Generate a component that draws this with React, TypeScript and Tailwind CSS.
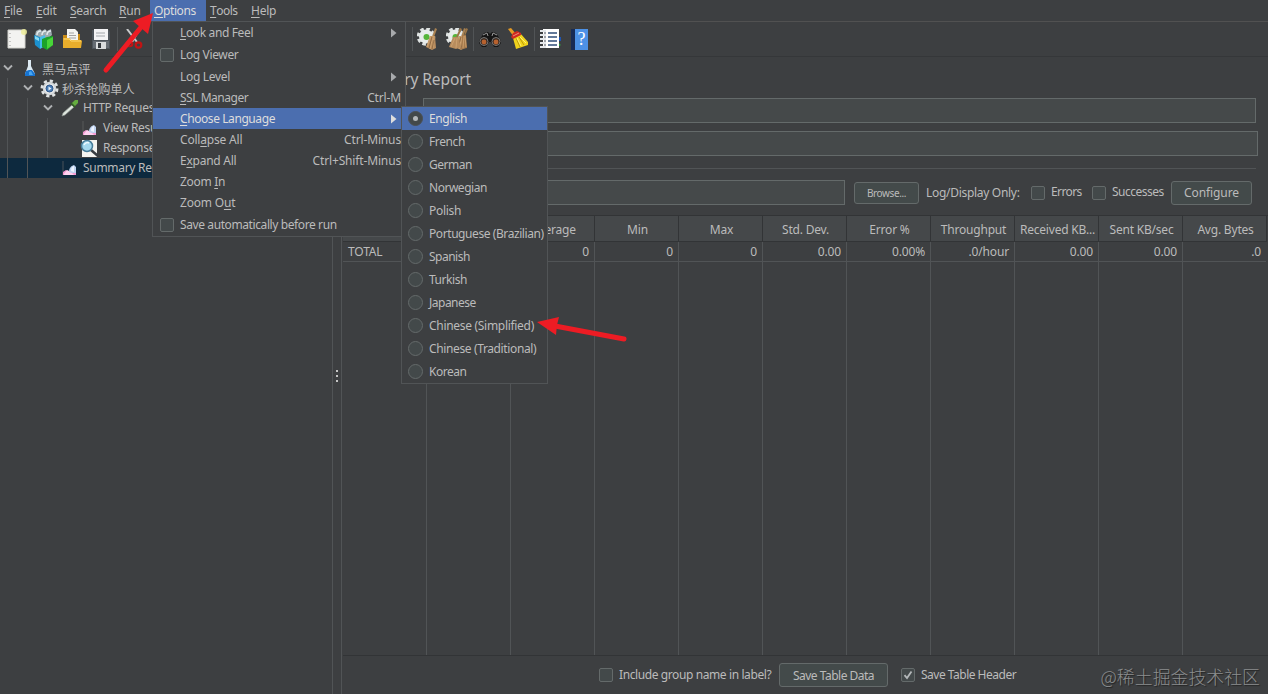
import type { ReactNode } from "react";
import clsx from "clsx";

interface MenuEntry {
  readonly label: string;
  readonly mnemonic?: number;
  readonly shortcut?: string;
  readonly submenu?: boolean;
  readonly checkbox?: boolean;
  readonly active?: boolean;
  readonly row: string;
  readonly tracking?: string;
}

const menuEntries: MenuEntry[] = [
  { label: "Look and Feel", mnemonic: 0, submenu: true, row: "h-[22px]", tracking: "tracking-[-0.36px]" },
  { label: "Log Viewer", checkbox: true, row: "h-[22px]", tracking: "tracking-[-0.36px]" },
  { label: "Log Level", submenu: true, row: "h-[22px]", tracking: "tracking-[-0.3px]" },
  { label: "SSL Manager", mnemonic: 0, shortcut: "Ctrl-M", row: "h-5", tracking: "tracking-[-0.48px]" },
  { label: "Choose Language", mnemonic: 0, submenu: true, active: true, row: "h-[21px]", tracking: "tracking-[-0.42px]" },
  { label: "Collapse All", mnemonic: 4, shortcut: "Ctrl-Minus", row: "h-[21px]", tracking: "tracking-[-0.2px]" },
  { label: "Expand All", mnemonic: 1, shortcut: "Ctrl+Shift-Minus", row: "h-[21px]", tracking: "tracking-[-0.25px]" },
  { label: "Zoom In", mnemonic: 5, row: "h-[21px]", tracking: "tracking-[-0.3px]" },
  { label: "Zoom Out", mnemonic: 6, row: "h-[21px]", tracking: "tracking-[-0.2px]" },
  { label: "Save automatically before run", checkbox: true, row: "h-[23px]", tracking: "tracking-[-0.4px]" },
];

const languages = [
  { name: "English", tracking: "tracking-[-0.4px]" },
  { name: "French", tracking: "tracking-[-0.4px]" },
  { name: "German", tracking: "tracking-[-0.5px]" },
  { name: "Norwegian", tracking: "tracking-[-0.48px]" },
  { name: "Polish", tracking: "tracking-[-0.3px]" },
  { name: "Portuguese (Brazilian)", tracking: "tracking-[-0.42px]" },
  { name: "Spanish", tracking: "tracking-[-0.5px]" },
  { name: "Turkish", tracking: "tracking-[-0.45px]" },
  { name: "Japanese", tracking: "tracking-[-0.5px]" },
  { name: "Chinese (Simplified)", tracking: "tracking-[-0.3px]" },
  { name: "Chinese (Traditional)", tracking: "tracking-[-0.37px]" },
  { name: "Korean", tracking: "tracking-[-0.5px]" },
];

// the first two columns sit behind the open menus
const columns = [
  { title: "", value: "TOTAL" },
  { title: "", value: "" },
  { title: "Average", value: "0" },
  { title: "Min", value: "0" },
  { title: "Max", value: "0" },
  { title: "Std. Dev.", value: "0.00" },
  { title: "Error %", value: "0.00%" },
  { title: "Throughput", value: ".0/hour" },
  { title: "Received KB...", value: "0.00" },
  { title: "Sent KB/sec", value: "0.00" },
  { title: "Avg. Bytes", value: ".0" },
];

function Mnemonic({ text, index }: { text: string; index?: number }) {
  if (index === undefined) return <>{text}</>;
  return (
    <>
      {text.slice(0, index)}
      <span className="underline decoration-1 underline-offset-2">{text[index]}</span>
      {text.slice(index + 1)}
    </>
  );
}

function CheckBox({ checked }: { checked?: boolean }) {
  return (
    <span className="block h-[14px] w-[14px] shrink-0 rounded-[2px] border border-[#646a6a] bg-[#43494a]">
      {checked && (
        <svg viewBox="0 0 12 12" className="h-3 w-3">
          <path d="M2.5 6.2 5 9 9.5 2.5" fill="none" stroke="#b4b8ba" strokeWidth="1.8" />
        </svg>
      )}
    </span>
  );
}

function Radio({ checked }: { checked?: boolean }) {
  return (
    <span
      className={clsx(
        "flex h-[15px] w-[15px] shrink-0 items-center justify-center rounded-full border bg-[#43494a]",
        checked ? "border-[#4b4f52]" : "border-[#646a6a]",
      )}
    >
      {checked && <span className="h-[5px] w-[5px] rounded-full bg-[#b4b8ba]" />}
    </span>
  );
}

/* ---------- toolbar icons ---------- */

function NewIcon() {
  return (
    <svg width="20" height="20" viewBox="0 0 20 20">
      <path d="M1 1h17v18H1z" fill="#f3f3f1" stroke="#d2d2cd" />
      <path d="M3 4v1M3 8v1M3 12v1M3 16v1" stroke="#999" />
      <circle cx="17" cy="3" r="3" fill="#ecec9a" opacity=".85" />
    </svg>
  );
}

function TemplatesIcon() {
  return (
    <svg width="21" height="21" viewBox="0 0 21 21">
      <path d="M2 6 3 2l4-2 2 2 3-2 2 2 4-2 1 6-5 4H5z" fill="#9dabb0" />
      <path d="M4 6c0-3 1-4 4-4M9 6c0-3 1-4 4-4M14 6c0-3 1-4 4-4" fill="none" stroke="#e4eaec" strokeWidth="1.5" />
      <path d="m1 6 6 2v12l-5-4z" fill="#1c91cf" />
      <path d="m7 8 5-2v11l-5 3z" fill="#47bde9" />
      <path d="m2 7 4 2v3L2 10z" fill="#8bdcf4" />
      <path d="m9 10 5-2 6-1v9l-6 5-5-3z" fill="#1ba32a" />
      <path d="m14 11 6-3v8l-6 4z" fill="#48d538" />
    </svg>
  );
}

function OpenIcon() {
  return (
    <svg width="21" height="20" viewBox="0 0 21 20">
      <path d="M1 6h4l1-1h12v12H1z" fill="#c98a15" />
      <path d="M5 0h8l3 3v9H5z" fill="#f4f4f2" />
      <path d="M7 4h5M7 6.500h7M7 9h7" stroke="#a2a2a2" />
      <path d="M1 9h6l2 2h10l1 1-1 7H1z" fill="#e9ae2c" />
      <path d="M2 10h5l2 2h10" fill="none" stroke="#ffda70" />
    </svg>
  );
}

function SaveIcon() {
  return (
    <svg width="19" height="20" viewBox="0 0 19 20">
      <path d="M0 1h17l1 2v17H0z" fill="#4d535a" />
      <path d="M2 0h14v11H2z" fill="#f3f3f5" />
      <path d="M4 4h9M4 7h9" stroke="#a2a6ab" />
      <path d="M1 12h16v7H1z" fill="#666c73" />
      <path d="M4 13h10v7H4z" fill="#dadcde" />
      <path d="M6 14h3v5H6z" fill="#34383d" />
    </svg>
  );
}

function CutIcon() {
  return (
    <svg width="19" height="20" viewBox="0 0 19 20">
      <path d="M2 0 12 13M14 1 7 13" stroke="#c8cacc" strokeWidth="2" />
      <ellipse cx="4.500" cy="15" rx="2.800" ry="2.300" fill="none" stroke="#c11313" strokeWidth="2" />
      <ellipse cx="13.500" cy="16" rx="2.800" ry="2.600" fill="none" stroke="#c11313" strokeWidth="2.200" />
    </svg>
  );
}

function GearBroomIcon({ double }: { double?: boolean }) {
  return (
    <svg width="22" height="22" viewBox="0 0 22 22">
      <circle cx="9" cy="8.500" r="7.800" fill="none" stroke="#dfe3e2" strokeWidth="3" strokeDasharray="3.600 2.526" />
      <circle cx="9" cy="8.500" r="7" fill="#e8eceb" />
      <circle cx="9.500" cy="9" r="3" fill="#55b53a" />
      <path d="m18 0 2 1-3 8h-2z" fill="#a88253" />
      <path d="M13 8h5l1 12-4 2-6-3z" fill="#b98d5e" />
      <path d="m14 8-4 11M16 8l-3 13M17 8l-1 12" stroke="#d0a674" strokeWidth=".8" />
      <path d="m15 9-3 11M17 12l-2 9" stroke="#765232" strokeWidth=".6" />
      {double && (
        <>
          <path d="m14 0 2 1-4 8h-2zM20 0l2 1-3 7h-1z" fill="#9a7547" />
          <path d="M7 9h5l3 10-5 2-7-2z" fill="#b88c5d" />
          <path d="M16 7h4l1 13-5 1z" fill="#a77a4b" />
          <path d="m9 10-4 9M11 10l-1 10M18 8l-1 12M19 8l1 11" stroke="#d0a674" strokeWidth=".8" />
        </>
      )}
    </svg>
  );
}

function BinocularsIcon() {
  return (
    <svg width="22" height="16" viewBox="0 0 22 16">
      <path d="M5 2 9 1l2 2 2-2 4 1 4 6 1 4-3 4h-4l-3-5h-2l-3 5H3l-3-4 1-4z" fill="#151515" />
      <path d="m4 4 4-2 1 3M18 4l-4-2-1 3" fill="none" stroke="#999" />
      <circle cx="5" cy="10.500" r="4" fill="#3b2b22" stroke="#777" />
      <circle cx="17" cy="10.500" r="4" fill="#3b2b22" stroke="#777" />
      <circle cx="5" cy="11" r="2.400" fill="#b8622f" />
      <circle cx="17" cy="11" r="2.400" fill="#b8622f" />
    </svg>
  );
}

function BroomIcon() {
  return (
    <svg width="22" height="22" viewBox="0 0 22 22">
      <path d="m1 1 3-1 6 7-3 2z" fill="#e49a25" />
      <path d="m6 10 7-5 8 9v3L9 21z" fill="#f0d31c" />
      <path d="m9 10 4 9M12 9l5 8" stroke="#a98a08" strokeWidth=".8" />
      <path d="m10 10 4 8M13 9l6 6" stroke="#fff173" />
      <path d="m4 9 2-4 4-2 4 2v2l-8 4z" fill="#cf2920" />
      <path d="m6 8 6-3" stroke="#ef8f76" />
    </svg>
  );
}

function ListIcon() {
  return (
    <svg width="22" height="22" viewBox="0 0 22 22">
      <path d="m16 13 5 4-5 3z" fill="#2f9f44" />
      <path d="M17 9h4v4h-4z" fill="#1f55b0" />
      <path d="M3 1h16v19H3z" fill="#fff" />
      <path d="M8 5h9M8 9h9M8 13h9M8 17h9" stroke="#304d78" strokeWidth="1.300" />
      <path d="M0 3h6M0 7h6M0 11h6M0 15h6M0 19h6" stroke="#e5e8eb" strokeWidth="2" />
      <path d="M4 5h2M4 9h2M4 13h2M4 17h2" stroke="#303743" strokeWidth=".9" />
    </svg>
  );
}

function HelpIcon() {
  return (
    <span className="flex h-[21px] w-[17px] items-center justify-center border-l-4 border-[#182b55] bg-[#4d91e5] font-['Liberation_Serif',serif] text-[18px] tracking-normal text-white">
      ?
    </span>
  );
}

/* ---------- tree icons ---------- */

function FlaskIcon() {
  return (
    <svg width="14" height="18" viewBox="0 0 14 18">
      <path d="M5 1h3v6l4 8v2H2v-2l3-8z" fill="#dce9f2" />
      <path d="m3 12 3-1h3l3 4v2H2v-2z" fill="#1673d1" />
      <path d="m6 13 2-1 2 4H6z" fill="#49a6f1" />
    </svg>
  );
}

function GearIcon() {
  return (
    <svg width="19" height="19" viewBox="0 0 19 19">
      <circle cx="9.500" cy="9.500" r="7.500" fill="none" stroke="#dfe2e3" strokeWidth="3" strokeDasharray="3.100 2.790" />
      <circle cx="9.500" cy="9.500" r="6" fill="#e9eaeb" stroke="#cfd3d5" strokeWidth="1.500" />
      <circle cx="9.500" cy="9.500" r="3.500" fill="#4b7eb8" stroke="#2e5687" />
      <path d="m8.500 7.500 3 2-3 2z" fill="#eaf3fa" />
    </svg>
  );
}

function DropperIcon() {
  return (
    <svg width="18" height="18" viewBox="0 0 18 18">
      <path d="m1 17 1-3 9-8 2 2-9 8z" fill="#dfe6df" stroke="#8b938e" strokeWidth=".7" />
      <path d="m10 4 4 4" stroke="#315f24" strokeWidth="2" />
      <path d="m11 4 3-3 3 0v3l-3 3z" fill="#65ad3f" />
    </svg>
  );
}

function ChartIcon() {
  return (
    <svg width="15" height="15" viewBox="0 0 15 15">
      <path d="M1 0v14" fill="none" stroke="#666" strokeWidth=".7" />
      <path d="M1 14v-3l3-2 3 2 4-1 3 1v3z" fill="#f39ad3" />
      <path d="m2 13 3-4 4 2 3 3H2z" fill="#ffd2f0" />
      <path d="M7 11c0-4 2-6 5-7l2 2v6h-4z" fill="#bfd3f0" />
      <path d="M9 10c0-3 1-4 3-5v6z" fill="#edf4ff" />
    </svg>
  );
}

function MagnifierIcon() {
  return (
    <svg width="19" height="19" viewBox="0 0 19 19">
      <path d="M2 1h15v17H2z" fill="#f4f4f1" />
      <path d="m11 11 7 6" stroke="#383d42" strokeWidth="2.500" />
      <circle cx="7" cy="7" r="5.500" fill="#a4d8ee" stroke="#477c99" strokeWidth="1.500" />
      <path d="M4 6c1-2 3-3 5-2" fill="none" stroke="#eefaff" strokeWidth="1.500" />
    </svg>
  );
}

function Chevron() {
  return (
    <svg width="10" height="8" viewBox="0 0 10 8" className="shrink-0">
      <path d="m1 1.500 4 4 4-4" fill="none" stroke="#aeb0b2" strokeWidth="1.900" />
    </svg>
  );
}

interface TreeRowProps {
  readonly icon: ReactNode;
  readonly label: string;
  readonly indent: string;
  readonly open?: boolean;
  readonly selected?: boolean;
  readonly guides?: number;
  readonly cjk?: boolean;
}

function TreeRow({ icon, label, indent, open, selected, guides = 0, cjk }: TreeRowProps) {
  return (
    <div className={clsx("relative flex h-5 items-center whitespace-nowrap", indent, selected && "bg-[#0d293e]")}>
      {guides > 0 && <span className="absolute left-[7px] h-5 w-px bg-[#515456]" />}
      {guides > 1 && <span className="absolute left-[27px] h-5 w-px bg-[#515456]" />}
      {guides > 2 && <span className="absolute left-[47px] h-5 w-px bg-[#515456]" />}
      {open && <Chevron />}
      <span className={clsx("flex w-[25px] shrink-0 justify-center", open && "ml-1")}>{icon}</span>
      <span
        className={clsx(
          cjk
            ? "pt-px font-['Noto_Sans_CJK_SC',sans-serif] text-[12.200px] tracking-[-0.1px]"
            : "ml-px tracking-[-0.3px]",
        )}
      >
        {label}
      </span>
    </div>
  );
}

function MenuBar() {
  const item = "flex h-[21px] items-center";
  return (
    <nav className="flex h-[22px] border-b border-[#515151] tracking-[-0.25px]">
      <span className={`${item} w-8 pl-1`}><Mnemonic text="File" index={0} /></span>
      <span className={`${item} w-[34px] pl-1`}><Mnemonic text="Edit" index={0} /></span>
      <span className={`${item} w-[49px] pl-1`}><Mnemonic text="Search" index={0} /></span>
      <span className={`${item} w-[35px] pl-1`}><Mnemonic text="Run" index={0} /></span>
      <span className={`${item} w-14 bg-[#4b6eaf] pl-1 tracking-[-0.4px] text-[#dddddd]`}><Mnemonic text="Options" index={0} /></span>
      <span className={`${item} w-[41px] pl-1 tracking-[-0.5px]`}><Mnemonic text="Tools" index={0} /></span>
      <span className={`${item} pl-1`}><Mnemonic text="Help" index={0} /></span>
    </nav>
  );
}

function ToolBar() {
  const divider = "h-6 w-px bg-[#515456]";
  return (
    <div className="flex h-[35px] items-center border-b border-[#353739] pl-[7px]">
      <div className="flex w-[405px] items-center">
        <span className="w-[26px]"><NewIcon /></span>
        <span className="w-[29px]"><TemplatesIcon /></span>
        <span className="w-[30px]"><OpenIcon /></span>
        <span className="w-[25px]"><SaveIcon /></span>
        <span className={divider} />
        <span className="ml-[7px]"><CutIcon /></span>
        <span className="ml-2 h-6 w-px bg-[#515456]" />
      </div>
      <span className={divider} />
      <span className="ml-1 w-[29px]"><GearBroomIcon /></span>
      <span className="w-[27px]"><GearBroomIcon double /></span>
      <span className={divider} />
      <span className="ml-[5px] w-[28px]"><BinocularsIcon /></span>
      <span className="w-[27px]"><BroomIcon /></span>
      <span className={divider} />
      <span className="ml-[5px] w-[31px]"><ListIcon /></span>
      <HelpIcon />
    </div>
  );
}

function TestTree() {
  return (
    <aside className="w-[333px] shrink-0 overflow-hidden border-r border-[#515456] pt-px">
      <TreeRow indent="pl-[3px]" open icon={<FlaskIcon />} label="黑马点评" cjk />
      <TreeRow indent="pl-[23px]" guides={1} open icon={<GearIcon />} label="秒杀抢购单人" cjk />
      <TreeRow indent="pl-[43px]" guides={2} open icon={<DropperIcon />} label="HTTP Request" />
      <TreeRow indent="pl-[77px]" guides={3} icon={<ChartIcon />} label="View Results Tree" />
      <TreeRow indent="pl-[77px]" guides={3} icon={<MagnifierIcon />} label="Response Time Graph" />
      <TreeRow indent="pl-[57px]" guides={2} selected icon={<ChartIcon />} label="Summary Report" />
    </aside>
  );
}

function ReportTable() {
  return (
    <div className="ml-px mt-[10px] flex h-[441px] border-y border-[#323436]">
      {columns.map((column, i) => (
        <div
          key={i}
          className={clsx("flex shrink-0 flex-col", i === 10 ? "w-[83px]" : "w-[84px] border-r border-[#515456]")}
        >
          <div className="-mr-px flex h-[26px] items-center justify-center border-b border-r border-[#323436] bg-[#45484a] pl-[2px] pt-[2px] tracking-[-0.2px]">
            {column.title}
          </div>
          <div
            className={clsx(
              "flex h-5 items-center border-b border-[#515456]",
              i === 0 ? "pl-[5px]" : "justify-end pr-[5px]",
              i === 10 && "pr-[4px]",
            )}
          >
            {column.value}
          </div>
        </div>
      ))}
    </div>
  );
}

function ReportPanel() {
  const field = "border border-[#646a6a] bg-[#45494a]";
  const button = "flex items-center justify-center rounded-[3px] border border-[#646a6a] bg-[#434a4a]";
  return (
    <main className="flex min-w-0 flex-1 flex-col overflow-hidden border-l border-[#515456]">
      <h1 className="flex h-[41px] w-[129px] shrink-0 items-center justify-end whitespace-nowrap pt-[3px] text-[15.500px] tracking-[-0.1px]">
        Summary Report
      </h1>
      <div className={`ml-[81px] mr-3 h-[25px] shrink-0 ${field}`} />
      <div className={`ml-[81px] mr-[10px] mt-2 h-[25px] shrink-0 ${field}`} />
      <div className="ml-2 mr-3 mt-3 h-px shrink-0 bg-[#515456]" />
      <div className="mt-[11px] flex h-[25px] shrink-0 items-center whitespace-nowrap">
        <div className={`ml-[81px] h-[25px] w-[422px] ${field}`} />
        <button className={`ml-[9px] h-[22px] w-[65px] pt-px text-[10px] tracking-[-0.4px] ${button}`}>Browse...</button>
        <span className="ml-[7px] w-[105px] tracking-[-0.3px]">Log/Display Only:</span>
        <CheckBox />
        <span className="ml-[6px] w-[41px] -translate-y-px tracking-[-0.6px]">Errors</span>
        <CheckBox />
        <span className="ml-[6px] w-[59px] -translate-y-px tracking-[-0.5px]">Successes</span>
        <button className={`h-6 w-[81px] text-[12px] tracking-[-0.1px] ${button}`}>Configure</button>
      </div>
      <ReportTable />
      <footer className="flex h-[38px] shrink-0 items-center whitespace-nowrap pl-[257px]">
        <CheckBox />
        <span className="ml-[6px] w-[160px] tracking-[-0.4px]">Include group name in label?</span>
        <button className={`h-6 w-[109px] pt-[2px] tracking-[-0.5px] ${button}`}>Save Table Data</button>
        <span className="ml-[13px]"><CheckBox checked /></span>
        <span className="ml-[6px] tracking-[-0.5px]">Save Table Header</span>
      </footer>
    </main>
  );
}

function OptionsMenu() {
  return (
    <div className="absolute left-[152px] top-[21px] w-[254px] border border-[#515456] bg-[#3d3f41]">
      {menuEntries.map((entry) => (
        <div
          key={entry.label}
          className={clsx(
            "flex items-center whitespace-nowrap pl-[7px]",
            entry.row,
            entry.active && "bg-[#4b6eaf] text-[#dddddd]",
          )}
        >
          <span className="w-5 shrink-0">{entry.checkbox && <CheckBox />}</span>
          <span className={entry.tracking}><Mnemonic text={entry.label} index={entry.mnemonic} /></span>
          {entry.shortcut && <span className="ml-auto pr-[4px]">{entry.shortcut}</span>}
          {entry.submenu && (
            <svg width="6" height="10" viewBox="0 0 6 10" className="ml-auto mr-[8px]">
              <path d="M0 0.500 5.500 5 0 9.500z" fill={entry.active ? "#dddddd" : "#a8aaac"} />
            </svg>
          )}
        </div>
      ))}
    </div>
  );
}

function LanguageMenu() {
  return (
    <div className="absolute left-[401px] top-[106px] w-[147px] border border-[#515456] bg-[#3d3f41]">
      {languages.map((language, i) => (
        <div
          key={language.name}
          className={clsx(
            "flex h-[23px] items-center gap-[6px] whitespace-nowrap pl-[6px]",
            language.tracking,
            i === 0 && "bg-[#4b6eaf] text-[#dddddd]",
          )}
        >
          <Radio checked={i === 0} />
          {language.name}
        </div>
      ))}
    </div>
  );
}

function App() {
  return (
    <div className="relative flex h-[694px] w-[1268px] flex-col overflow-hidden bg-[#3d3f41] font-['Noto_Sans','Noto_Sans_CJK_SC',sans-serif] text-[12px] leading-4 tracking-[-0.15px] text-[#bbbbbb]">
      <MenuBar />
      <ToolBar />
      <div className="flex min-h-0 flex-1">
        <TestTree />
        <div className="flex w-2 shrink-0 flex-col items-center gap-[3px] pt-[313px]">
          <span className="h-[2px] w-[2px] bg-[#c5c5c5]" />
          <span className="h-[2px] w-[2px] bg-[#c5c5c5]" />
          <span className="h-[2px] w-[2px] bg-[#c5c5c5]" />
        </div>
        <ReportPanel />
      </div>
      <OptionsMenu />
      <LanguageMenu />
      <svg className="pointer-events-none absolute inset-0" width="1268" height="694" viewBox="0 0 1268 694">
        <g fill="#ed1c24" stroke="#ed1c24">
          <path d="M106 70 142 26" strokeWidth="5" strokeLinecap="round" />
          <path d="m153 13-5 21-15-13z" stroke="none" />
          <path d="M624 339 555 326" strokeWidth="5" strokeLinecap="round" />
          <path d="m537 322 22-5-2 8-1 10z" stroke="none" />
        </g>
      </svg>
      <div className="absolute bottom-[6px] right-[8px] whitespace-nowrap font-['Noto_Sans_CJK_SC',sans-serif] text-[17.900px] font-light leading-6 tracking-normal text-[#8b8d8e] [text-shadow:1px_1px_1px_#222]">
        @稀土掘金技术社区
      </div>
    </div>
  );
}

export default App;
